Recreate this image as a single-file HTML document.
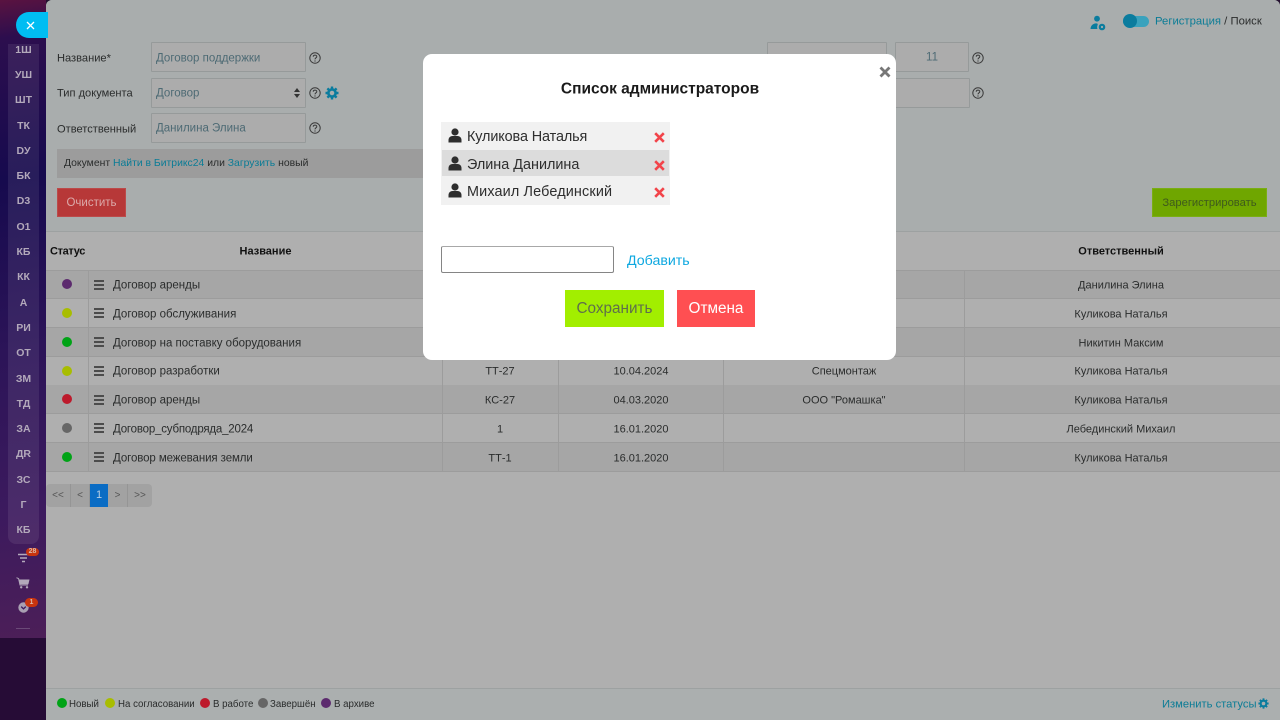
<!DOCTYPE html>
<html lang="ru"><head><meta charset="utf-8"><title>Список администраторов</title>
<style>
*{box-sizing:border-box}
html,body{margin:0;padding:0;width:1280px;height:720px;overflow:hidden;background:#23102f}
body{position:relative;font-family:"Liberation Sans","DejaVu Sans",sans-serif;font-size:11.5px;color:#2a2c2c}
.a{position:absolute;white-space:nowrap}
.t{position:absolute;white-space:nowrap;transform:translateY(-50%);line-height:1;margin-top:1px}
.c{position:absolute;white-space:nowrap;transform:translate(-50%,-50%);line-height:1;margin-top:1px}
.lnk{color:#0b7c96}
.fld{position:absolute;background:#acacac;border:1px solid #969a9a;border-radius:1px}
.sb{position:absolute;left:8px;width:31px;text-align:center;color:#b3a9bb;font-size:10.5px;font-weight:bold;transform:translateY(-50%);line-height:1}
.row{position:absolute;left:46px;width:1234px;border-bottom:1px solid #9c9c9c}
.vl{position:absolute;width:1px;background:#9c9c9c}
.dot{position:absolute;width:10px;height:10px;border-radius:50%}
.burger{position:absolute;left:94px;width:10px;height:10px;border-top:2px solid #4c4c4c;border-bottom:2px solid #4c4c4c}
.burger:after{content:"";position:absolute;left:0;right:0;top:2px;height:2px;background:#4c4c4c}
.pg{position:absolute;top:484px;height:23px;background:#a2a2a2;color:#555;font-size:10px;line-height:23px;text-align:center;border-right:1px solid #959595}
.it{position:absolute;left:441px;width:229px}
.nm{position:absolute;left:467px;font-size:14.4px;color:#2e2e2e;transform:translateY(-50%);line-height:1;white-space:nowrap;margin-top:.5px}
.h{font-weight:bold;color:#111;font-size:11px}
.s{font-size:11px}
.f{font-size:9.7px}
.l{font-size:11.1px}
</style></head><body>

<!-- sidebar -->
<div class="a" style="left:0;top:0;width:46px;height:638px;background:linear-gradient(172deg,#5a1340 0%,#2c0e4e 6%,#160a4e 28%,#2c1458 55%,#3c1a5e 80%,#4c1f58 100%)"></div>
<div class="a" style="left:0;top:638px;width:46px;height:82px;background:#260c36"></div>
<div class="a" style="left:8px;top:44px;width:31px;height:500px;background:rgba(255,255,255,.08);border-radius:0 0 8px 8px"></div>
<div class="a" style="left:16px;top:12px;width:32px;height:26px;background:#00bdf2;border-radius:13px 0 0 13px;z-index:5"></div>
<svg class="a" style="left:26px;top:21px;z-index:6" width="9" height="9" viewBox="0 0 9 9"><path d="M1 1L8 8M8 1L1 8" stroke="#fff" stroke-width="1.3"/></svg>
<div class="sb" style="top:50px">1Ш</div><div class="sb" style="top:75px">УШ</div><div class="sb" style="top:100px">ШТ</div><div class="sb" style="top:126px">ТК</div><div class="sb" style="top:151px">DУ</div><div class="sb" style="top:176px">БК</div><div class="sb" style="top:201px">D3</div><div class="sb" style="top:227px">О1</div><div class="sb" style="top:252px">КБ</div><div class="sb" style="top:277px">КК</div><div class="sb" style="top:303px">А</div><div class="sb" style="top:328px">РИ</div><div class="sb" style="top:353px">ОТ</div><div class="sb" style="top:379px">ЗМ</div><div class="sb" style="top:404px">ТД</div><div class="sb" style="top:429px">ЗА</div><div class="sb" style="top:454px">ДR</div><div class="sb" style="top:480px">ЗС</div><div class="sb" style="top:505px">Г</div><div class="sb" style="top:530px">КБ</div>
<svg class="a" style="left:17px;top:553px" width="13" height="11" viewBox="0 0 13 11"><path d="M1 1.5H12M3 5H10M5 8.5H8" stroke="#b3a9bb" stroke-width="1.6"/></svg>
<div class="a" style="left:26px;top:548px;width:13px;height:8px;background:#c8340f;border-radius:4px;color:#d9b9a9;font-size:7px;font-weight:bold;line-height:8px;text-align:center">28</div>
<svg class="a" style="left:16px;top:577px" width="14" height="12" viewBox="0 0 14 12"><path d="M0.5 0.7L2.6 1.6L4 8H12" fill="none" stroke="#b3a9bb" stroke-width="1"/><path d="M3 2.5H13.5L12.4 7.2H4Z" fill="#b3a9bb"/><circle cx="5.2" cy="10.3" r="1.2" fill="#b3a9bb"/><circle cx="11" cy="10.3" r="1.2" fill="#b3a9bb"/></svg>
<svg class="a" style="left:18px;top:602px" width="11" height="11" viewBox="0 0 11 11"><circle cx="5.5" cy="5.5" r="5.2" fill="#a99fb2"/><path d="M3.2 4.6L5.5 6.8L7.8 4.6" fill="none" stroke="#3c1a5e" stroke-width="1.3"/></svg>
<div class="a" style="left:25px;top:598px;width:13px;height:9px;background:#c8340f;border-radius:5px;color:#d9b9a9;font-size:7px;font-weight:bold;line-height:9px;text-align:center">1</div>
<div class="a" style="left:16px;top:628px;width:14px;height:1px;background:#6b4a78"></div>

<!-- main panel -->
<div class="a" style="left:46px;top:0;width:1234px;height:720px;background:#afafaf;border-radius:6px 6px 0 0;overflow:hidden">
  <div class="a" style="left:0;top:0;width:1234px;height:232px;background:#a9adad;border-bottom:1px solid #9da1a1"></div>
  <div class="a" style="left:0;top:688px;width:1234px;height:32px;background:#abafaf;border-top:1px solid #9da1a1"></div>
</div>

<!-- top right -->
<svg class="a" style="left:1090px;top:15px" width="16" height="16" viewBox="0 0 16 16"><circle cx="7" cy="3.7" r="2.9" fill="#0b7c9e"/><path d="M0.5 14C0.8 10.5 2.8 8.6 6 8.4C7.6 8.4 8 9 7.6 10C7 11.5 7 12.8 7.5 14Z" fill="#0b7c9e"/><circle cx="12" cy="12" r="2.2" fill="none" stroke="#0b7c9e" stroke-width="2.2"/></svg>
<div class="a" style="left:1123px;top:16px;width:26px;height:11px;background:#3aa2bd;border-radius:6px"></div>
<div class="a" style="left:1123px;top:14px;width:14px;height:14px;background:#0b7c9e;border-radius:50%"></div>
<div class="t" style="left:1155px;top:20.5px;font-size:11.3px"><span class="lnk">Регистрация</span> / Поиск</div>

<!-- form left -->
<div class="t l" style="left:57px;top:57.5px">Название*</div>
<div class="fld" style="left:151px;top:42px;width:155px;height:30px"></div>
<div class="t" style="left:156px;top:57.5px;color:#4d6a74">Договор поддержки</div>
<div class="t l" style="left:57px;top:93px">Тип документа</div>
<div class="fld" style="left:151px;top:78px;width:155px;height:30px"></div>
<div class="t" style="left:156px;top:93px;color:#4d6a74">Договор</div>
<svg class="a" style="left:294px;top:88px" width="6" height="10" viewBox="0 0 6 10"><path d="M3 0L6 4H0ZM3 10L0 6H6Z" fill="#333"/></svg>
<div class="t l" style="left:57px;top:128.5px">Ответственный</div>
<div class="fld" style="left:151px;top:113px;width:155px;height:30px"></div>
<div class="t" style="left:156px;top:128px;color:#4d6a74">Данилина Элина</div>
<svg class="a" style="left:309px;top:52px" width="12" height="12" viewBox="0 0 12 12"><circle cx="6" cy="6" r="5.2" fill="none" stroke="#3a3a3a"/><path d="M4.2 4.7C4.3 2.6 7.8 2.6 7.8 4.6C7.8 5.9 6 5.8 6 7.4M6 8.4V9.6" fill="none" stroke="#3a3a3a"/></svg>
<svg class="a" style="left:309px;top:87px" width="12" height="12" viewBox="0 0 12 12"><circle cx="6" cy="6" r="5.2" fill="none" stroke="#3a3a3a"/><path d="M4.2 4.7C4.3 2.6 7.8 2.6 7.8 4.6C7.8 5.9 6 5.8 6 7.4M6 8.4V9.6" fill="none" stroke="#3a3a3a"/></svg>
<svg class="a" style="left:309px;top:122px" width="12" height="12" viewBox="0 0 12 12"><circle cx="6" cy="6" r="5.2" fill="none" stroke="#3a3a3a"/><path d="M4.2 4.7C4.3 2.6 7.8 2.6 7.8 4.6C7.8 5.9 6 5.8 6 7.4M6 8.4V9.6" fill="none" stroke="#3a3a3a"/></svg>
<svg class="a" style="left:325px;top:86px" width="14" height="14" viewBox="0 0 14 14"><circle cx="7" cy="7" r="3.6" fill="none" stroke="#0b7c9e" stroke-width="2.6"/><path d="M7 0.5V3M7 11V13.5M0.5 7H3M11 7H13.5M2.4 2.4L4.2 4.2M9.8 9.8L11.6 11.6M11.6 2.4L9.8 4.2M4.2 9.8L2.4 11.6" stroke="#0b7c9e" stroke-width="2.4"/></svg>
<div class="a" style="left:57px;top:149px;width:380px;height:29px;background:#9c9c9c"></div>
<div class="t" style="left:64px;top:162.5px;font-size:10.4px">Документ <span class="lnk">Найти в Битрикс24</span> или <span class="lnk">Загрузить</span> новый</div>
<div class="a" style="left:57px;top:188px;width:69px;height:29px;background:#b73838;border:1px solid #bb4a4a;color:#dcaaaa;font-size:11.5px;line-height:28px;text-align:center">Очистить</div>

<!-- form right -->
<div class="fld" style="left:767px;top:42px;width:120px;height:30px"></div>
<div class="fld" style="left:895px;top:42px;width:74px;height:30px"></div>
<div class="c" style="left:932px;top:57px;color:#4d6a74">11</div>
<div class="fld" style="left:767px;top:78px;width:203px;height:30px"></div>
<svg class="a" style="left:972px;top:52px" width="12" height="12" viewBox="0 0 12 12"><circle cx="6" cy="6" r="5.2" fill="none" stroke="#3a3a3a"/><path d="M4.2 4.7C4.3 2.6 7.8 2.6 7.8 4.6C7.8 5.9 6 5.8 6 7.4M6 8.4V9.6" fill="none" stroke="#3a3a3a"/></svg>
<svg class="a" style="left:972px;top:87px" width="12" height="12" viewBox="0 0 12 12"><circle cx="6" cy="6" r="5.2" fill="none" stroke="#3a3a3a"/><path d="M4.2 4.7C4.3 2.6 7.8 2.6 7.8 4.6C7.8 5.9 6 5.8 6 7.4M6 8.4V9.6" fill="none" stroke="#3a3a3a"/></svg>
<div class="a" style="left:1152px;top:188px;width:115px;height:29px;background:#6fa600;border:1px solid #7aad14;color:#3f5a1c;font-size:11.2px;line-height:28px;text-align:center">Зарегистрировать</div>

<!-- table rows -->
<div class="row" style="top:232px;height:38.5px;background:#afafaf"></div>
<div class="row" style="top:270.5px;height:28.7px;background:#a6a6a6"></div>
<div class="row" style="top:299px;height:28.7px;background:#afafaf"></div>
<div class="row" style="top:327.5px;height:29px;background:#a6a6a6"></div>
<div class="row" style="top:356.5px;height:29px;background:#afafaf"></div>
<div class="row" style="top:385px;height:29px;background:#a6a6a6"></div>
<div class="row" style="top:414px;height:29px;background:#afafaf"></div>
<div class="row" style="top:442.5px;height:29px;background:#a6a6a6"></div>
<div class="vl" style="left:88px;top:270px;height:201px"></div>
<div class="vl" style="left:442px;top:270px;height:201px"></div>
<div class="vl" style="left:558px;top:270px;height:201px"></div>
<div class="vl" style="left:723px;top:270px;height:201px"></div>
<div class="vl" style="left:964px;top:270px;height:201px"></div>
<div class="t h" style="left:50px;top:251px;letter-spacing:-.35px">Статус</div>
<div class="c h" style="left:265.5px;top:251px">Название</div>
<div class="c h" style="left:1121px;top:251px">Ответственный</div>

<div class="dot" style="left:62px;top:279px;background:#5c2a6e"></div>
<div class="dot" style="left:62px;top:308px;background:#a8bd00"></div>
<div class="dot" style="left:62px;top:337px;background:#00a316"></div>
<div class="dot" style="left:62px;top:366px;background:#a8bd00"></div>
<div class="dot" style="left:62px;top:394px;background:#bd1a2c"></div>
<div class="dot" style="left:62px;top:423px;background:#666"></div>
<div class="dot" style="left:62px;top:452px;background:#00a316"></div>

<div class="burger" style="top:280px"></div><div class="burger" style="top:308px"></div><div class="burger" style="top:337px"></div><div class="burger" style="top:366px"></div><div class="burger" style="top:395px"></div><div class="burger" style="top:423px"></div><div class="burger" style="top:452px"></div>

<div class="t" style="left:113px;top:285px">Договор аренды</div>
<div class="t" style="left:113px;top:313.5px">Договор обслуживания</div>
<div class="t" style="left:113px;top:342.5px">Договор на поставку оборудования</div>
<div class="t" style="left:113px;top:371px">Договор разработки</div>
<div class="t" style="left:113px;top:400px">Договор аренды</div>
<div class="t" style="left:113px;top:428.5px;letter-spacing:-.2px">Договор_субподряда_2024</div>
<div class="t" style="left:113px;top:457.5px;letter-spacing:-.1px">Договор межевания земли</div>

<div class="c s" style="left:500px;top:371px">ТТ-27</div>
<div class="c s" style="left:500px;top:400px">КС-27</div>
<div class="c s" style="left:500px;top:428.5px">1</div>
<div class="c s" style="left:500px;top:457.5px">ТТ-1</div>
<div class="c s" style="left:641px;top:371px">10.04.2024</div>
<div class="c s" style="left:641px;top:400px">04.03.2020</div>
<div class="c s" style="left:641px;top:428.5px">16.01.2020</div>
<div class="c s" style="left:641px;top:457.5px">16.01.2020</div>
<div class="c s" style="left:844px;top:371px">Спецмонтаж</div>
<div class="c s" style="left:844px;top:400px">ООО "Ромашка"</div>
<div class="c s" style="left:1121px;top:285px">Данилина Элина</div>
<div class="c s" style="left:1121px;top:314px">Куликова Наталья</div>
<div class="c s" style="left:1121px;top:342.5px">Никитин Максим</div>
<div class="c s" style="left:1121px;top:371px">Куликова Наталья</div>
<div class="c s" style="left:1121px;top:400px">Куликова Наталья</div>
<div class="c s" style="left:1121px;top:428.5px">Лебединский Михаил</div>
<div class="c s" style="left:1121px;top:457.5px">Куликова Наталья</div>

<!-- pagination -->
<div class="pg" style="left:46px;width:25px;border-radius:4px 0 0 4px">&lt;&lt;</div>
<div class="pg" style="left:71px;width:19px">&lt;</div>
<div class="pg" style="left:90px;width:18px;background:#0a6cc4;color:#b9cfe3;font-size:11px;border:0">1</div>
<div class="pg" style="left:108px;width:20px">&gt;</div>
<div class="pg" style="left:128px;width:24px;border-radius:0 4px 4px 0;border:0">&gt;&gt;</div>

<!-- footer -->
<div class="dot" style="left:57px;top:698px;background:#00a316"></div>
<div class="t f" style="left:69px;top:703.5px">Новый</div>
<div class="dot" style="left:105px;top:698px;background:#a8bd00"></div>
<div class="t f" style="left:118px;top:703.5px">На согласовании</div>
<div class="dot" style="left:200px;top:698px;background:#bd1a2c"></div>
<div class="t f" style="left:213px;top:703.5px">В работе</div>
<div class="dot" style="left:258px;top:698px;background:#666"></div>
<div class="t f" style="left:270px;top:703.5px">Завершён</div>
<div class="dot" style="left:321px;top:698px;background:#5c2a6e"></div>
<div class="t f" style="left:334px;top:703.5px">В архиве</div>
<div class="t lnk" style="left:1162px;top:703.5px;font-size:11.2px">Изменить статусы</div>
<svg class="a" style="left:1258px;top:698px" width="11" height="11" viewBox="0 0 14 14"><circle cx="7" cy="7" r="3.6" fill="none" stroke="#0b7c9e" stroke-width="2.6"/><path d="M7 0.5V3M7 11V13.5M0.5 7H3M11 7H13.5M2.4 2.4L4.2 4.2M9.8 9.8L11.6 11.6M11.6 2.4L9.8 4.2M4.2 9.8L2.4 11.6" stroke="#0b7c9e" stroke-width="2.4"/></svg>

<!-- modal -->
<div style="position:absolute;left:0;top:0;width:1280px;height:720px;z-index:10">
<div class="a" style="left:423px;top:54px;width:473px;height:306px;background:#fff;border-radius:9px"></div>
<div class="c" style="left:660px;top:88px;font-size:15.5px;font-weight:bold;color:#1a1a1a">Список администраторов</div>
<svg class="a" style="left:879px;top:66px" width="12" height="12" viewBox="0 0 12 12"><path d="M1.5 1.5L10.5 10.5M10.5 1.5L1.5 10.5" stroke="#777" stroke-width="2.8"/></svg>

<div class="it" style="top:122px;height:83px;background:#f1f1f1"></div>
<div class="it" style="left:442px;width:227px;top:150px;height:26px;background:#dcdcdc"></div>
<svg class="a" style="left:448px;top:128px" width="14" height="15" viewBox="0 0 14 15"><circle cx="7" cy="4" r="3.6" fill="#2e2e2e"/><path d="M0.5 14.5V12C0.5 9.5 2.5 8 4.5 8H9.5C11.5 8 13.5 9.5 13.5 12V14.5Z" fill="#2e2e2e"/></svg>
<svg class="a" style="left:448px;top:155.5px" width="14" height="15" viewBox="0 0 14 15"><circle cx="7" cy="4" r="3.6" fill="#2e2e2e"/><path d="M0.5 14.5V12C0.5 9.5 2.5 8 4.5 8H9.5C11.5 8 13.5 9.5 13.5 12V14.5Z" fill="#2e2e2e"/></svg>
<svg class="a" style="left:448px;top:183px" width="14" height="15" viewBox="0 0 14 15"><circle cx="7" cy="4" r="3.6" fill="#2e2e2e"/><path d="M0.5 14.5V12C0.5 9.5 2.5 8 4.5 8H9.5C11.5 8 13.5 9.5 13.5 12V14.5Z" fill="#2e2e2e"/></svg>
<div class="nm" style="top:136.5px;letter-spacing:-.1px">Куликова Наталья</div>
<div class="nm" style="top:164px">Элина Данилина</div>
<div class="nm" style="top:191.5px;letter-spacing:.15px">Михаил Лебединский</div>
<svg class="a" style="left:654px;top:132px" width="11" height="11" viewBox="0 0 11 11"><path d="M1.2 1.2L9.8 9.8M9.8 1.2L1.2 9.8" stroke="#f2444a" stroke-width="2.6"/></svg>
<svg class="a" style="left:654px;top:160px" width="11" height="11" viewBox="0 0 11 11"><path d="M1.2 1.2L9.8 9.8M9.8 1.2L1.2 9.8" stroke="#f2444a" stroke-width="2.6"/></svg>
<svg class="a" style="left:654px;top:187px" width="11" height="11" viewBox="0 0 11 11"><path d="M1.2 1.2L9.8 9.8M9.8 1.2L1.2 9.8" stroke="#f2444a" stroke-width="2.6"/></svg>

<div class="a" style="left:441px;top:246px;width:173px;height:27px;border:1px solid #858585;border-top-color:#a8a8a8;border-radius:2px;background:#fff"></div>
<div class="t" style="left:627px;top:259.5px;font-size:14.2px;color:#0ea8e0">Добавить</div>
<div class="a" style="left:565px;top:290px;width:99px;height:37px;background:#a2ee00;color:#5f6f4c;font-size:15.3px;line-height:37px;text-align:center">Сохранить</div>
<div class="a" style="left:677px;top:290px;width:78px;height:37px;background:#ff4f52;color:#fff;font-size:15.3px;line-height:37px;text-align:center">Отмена</div>
</div>
</body></html>
